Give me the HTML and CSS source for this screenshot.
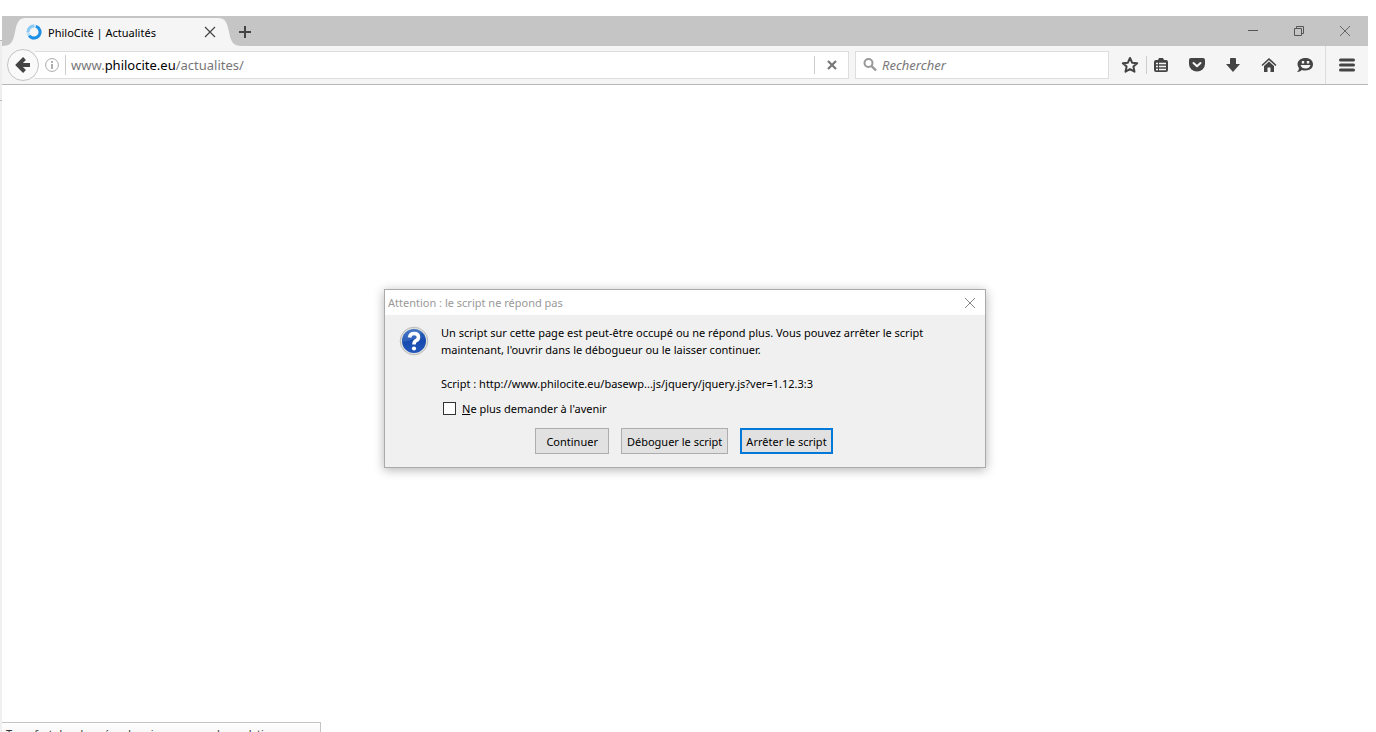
FILE: index.html
```html
<!DOCTYPE html>
<html lang="fr">
<head>
    <meta charset="UTF-8">
    <meta name="viewport" content="width=device-width, initial-scale=1.0">
    <title>PhiloCité | Actualités</title>
    <link rel="stylesheet" href="styles.css">
</head>
<body>
    <div class="desktop-edge"></div>
    <div class="window">
        <!-- Onglets -->
        <header class="tab-bar">
            <svg width="24" height="28" viewBox="0 0 24 28"><path d="M0 28C9 28 11 24 13 14C15 4 17 0 24 0V28Z" fill="#f5f5f5"/></svg>
            <div class="tab">
                <svg width="16" height="16" viewBox="0 0 16 16" fill="none" stroke-width="3">
                    <circle cx="8" cy="8" r="6" stroke="#bcdff5"/>
                    <path d="M8 2A6 6 0 0 0 2 8" stroke="#8cc9f2"/>
                    <path d="M10 2.400A6 6 0 1 1 3.200 11.600" stroke="#1e90e8"/>
                </svg>
                <span class="tab-title">PhiloCité | Actualités</span>
                <button class="icon-btn tab-close" aria-label="Fermer l'onglet">
                    <svg width="12" height="12" viewBox="0 0 12 12" stroke="#444" stroke-width="1.2"><path d="M1 1L11 11M11 1L1 11"/></svg>
                </button>
            </div>
            <svg width="24" height="28" viewBox="0 0 24 28"><path d="M24 28C15 28 13 24 11 14C9 4 7 0 0 0V28Z" fill="#f5f5f5"/></svg>
            <button class="icon-btn new-tab" aria-label="Nouvel onglet">
                <svg width="12" height="12" viewBox="0 0 12 12" stroke="#444" stroke-width="2"><path d="M6 0V12M0 6H12"/></svg>
            </button>
            <div class="window-controls">
                <button class="icon-btn" aria-label="Réduire"><svg width="12" height="12" viewBox="0 0 12 12" stroke="#555"><path d="M1 5.500H11"/></svg></button>
                <button class="icon-btn" aria-label="Restaurer"><svg width="12" height="12" viewBox="0 0 12 12" fill="none" stroke="#555"><path d="M1.500 3.500H8.500V10.500H1.500ZM3.500 3.500V1.500H10.500V8.500H8.500"/></svg></button>
                <button class="icon-btn" aria-label="Fermer"><svg width="12" height="12" viewBox="0 0 12 12" stroke="#666"><path d="M1 1L11 11M11 1L1 11"/></svg></button>
            </div>
        </header>

        <!-- Barre de navigation -->
        <nav class="nav-bar">
            <button class="icon-btn back-btn" aria-label="Page précédente">
                <svg width="16" height="16" viewBox="0 0 16 16" fill="none" stroke="#444" stroke-width="4"><path d="M9.500 1.500L3 8L9.500 14.500M3 8H15"/></svg>
            </button>
            <div class="url-bar">
                <svg width="14" height="14" viewBox="0 0 14 14" fill="none" stroke="#aaa"><circle cx="7" cy="7" r="6.400"/><path d="M7 6V11M7 3V5" stroke="#999" stroke-width="1.600"/></svg>
                <a class="url" href="#">www.<b>philocite.eu</b>/actualites/</a>
                <button class="icon-btn stop-btn" aria-label="Arrêter">
                    <svg width="10" height="10" viewBox="0 0 10 10" stroke="#777" stroke-width="2.200"><path d="M1 1L9 9M9 1L1 9"/></svg>
                </button>
            </div>
            <label class="search-bar">
                <svg width="14" height="14" viewBox="0 0 14 14" fill="none" stroke="#999" stroke-width="2"><circle cx="5.500" cy="5" r="4"/><path d="M8.500 8L13 12.500" stroke-width="2.400"/></svg>
                <input type="text" placeholder="Rechercher" aria-label="Rechercher">
            </label>
            <div class="tools">
                <button class="icon-btn star-btn" aria-label="Marquer cette page">
                    <svg width="18" height="18" viewBox="0 0 18 18" fill="none" stroke="#444" stroke-width="2" stroke-linejoin="round"><path d="M9 2L11.100 6.700L16.200 7.200L12.400 10.600L13.500 15.700L9 13.100L4.500 15.700L5.600 10.600L1.800 7.200L6.900 6.700Z"/></svg>
                </button>
                <button class="icon-btn tool-btn" aria-label="Marque-pages">
                    <svg width="16" height="16" viewBox="0 0 16 16"><path d="M5 3L6 1H10L11 3H13Q15 3 15 5V13Q15 15 13 15H3Q1 15 1 13V5Q1 3 3 3Z" fill="#444"/><path d="M3 6.500H5M6 6.500H13M3 9.500H5M6 9.500H13M3 12.500H5M6 12.500H13" stroke="#f5f5f5" stroke-width="1.600"/></svg>
                </button>
                <button class="icon-btn tool-btn" aria-label="Pocket">
                    <svg width="16" height="16" viewBox="0 0 16 16"><path d="M2 1H14Q16 1 16 3V7A8 7.500 0 0 1 0 7V3Q0 1 2 1Z" fill="#444"/><path d="M4.500 6L8 9.300L11.500 6" fill="none" stroke="#f5f5f5" stroke-width="2" stroke-linecap="round" stroke-linejoin="round"/></svg>
                </button>
                <button class="icon-btn tool-btn" aria-label="Téléchargements">
                    <svg width="16" height="16" viewBox="0 0 16 16" fill="#444"><path d="M6 1H10Q11 1 11 2V7H15L8 15L1 7H5V2Q5 1 6 1Z"/></svg>
                </button>
                <button class="icon-btn tool-btn" aria-label="Accueil">
                    <svg width="16" height="16" viewBox="0 0 16 16" fill="#444"><path d="M1 8.500L8 2L15 8.500" fill="none" stroke="#444" stroke-width="1.600"/><path d="M3 9L8 4.500L13 9V15H9.500V10.500H6.500V15H3Z"/></svg>
                </button>
                <button class="icon-btn tool-btn" aria-label="Discussion">
                    <svg width="16" height="16" viewBox="0 0 16 16"><path d="M8.500 1C13 1 16 3.500 16 7.300S13 13.500 8.500 13.500Q6.500 13.500 5 13Q3 15 0 15Q2 13.500 2 11.300Q.5 9.500 .5 7.300C.5 3.500 4 1 8.500 1Z" fill="#444"/><path d="M3.500 8H13.500Q12.500 11.500 8.500 11.500T3.500 8Z" fill="#f5f5f5"/><path d="M6 4V6.500M11 4V6.500" stroke="#f5f5f5" stroke-width="2.400"/></svg>
                </button>
                <button class="icon-btn menu-btn" aria-label="Menu">
                    <svg width="16" height="14" viewBox="0 0 16 14" stroke="#444" stroke-width="3" stroke-linecap="round"><path d="M1.500 2H14.500M1.500 7H14.500M1.500 12H14.500"/></svg>
                </button>
            </div>
        </nav>

        <main class="page">
            <section class="dialog" role="dialog" aria-labelledby="dialogTitle">
                <div class="dialog-title">
                    <span id="dialogTitle">Attention : le script ne répond pas</span>
                    <button class="icon-btn" aria-label="Fermer">
                        <svg width="12" height="12" viewBox="0 0 12 12" stroke="#888"><path d="M1 1L11 11M11 1L1 11"/></svg>
                    </button>
                </div>
                <div class="dialog-body">
                    <svg class="question" width="30" height="30" viewBox="0 0 30 30">
                        <defs><linearGradient id="blue" x1="0" y1="0" x2="0" y2="1"><stop offset="0" stop-color="#3568bd"/><stop offset=".5" stop-color="#174aae"/><stop offset="1" stop-color="#2457bb"/></linearGradient></defs>
                        <circle cx="15" cy="15" r="13.800" fill="#e2e2dc" stroke="#bbb"/>
                        <circle cx="15" cy="15" r="12" fill="url(#blue)"/>
                        <path d="M3 16A12 12 0 0 1 23 6Q18 14 3 16Z" fill="#6b95d8" opacity=".3"/>
                        <path d="M10.500 11.500Q11 7.500 15 7.500Q19.500 7.500 19.500 11.200Q19.500 13.500 17 14.700Q15 15.800 15 18.500" fill="none" stroke="#fff" stroke-width="3.600"/>
                        <circle cx="15" cy="22.500" r="2.100" fill="#fff"/>
                    </svg>
                    <div class="dialog-text">
                        <p>Un script sur cette page est peut-être occupé ou ne répond plus. Vous pouvez arrêter le script<br>maintenant, l'ouvrir dans le débogueur ou le laisser continuer.</p>
                        <p>Script : http://www.philocite.eu/basewp...js/jquery/jquery.js?ver=1.12.3:3</p>
                        <label class="check"><input type="checkbox"><span><u>N</u>e plus demander à l'avenir</span></label>
                    </div>
                </div>
                <div class="dialog-actions">
                    <button class="btn btn-small">Continuer</button>
                    <button class="btn">Déboguer le script</button>
                    <button class="btn btn-default">Arrêter le script</button>
                </div>
            </section>
        </main>
    </div>
    <div class="status">Transfert des données depuis www.google-analytics.com…</div>
</body>
</html>
```
FILE: styles.css
```css
* {
    box-sizing: border-box;
}
body {
    display: flex;
    height: 100vh;
    margin: 0;
    overflow: hidden;
    position: relative;
    background: #fff;
    color: #000;
    font-family: "Noto Sans", "Open Sans", sans-serif;
    font-size: 11px;
}
svg {
    display: block;
    flex: none;
}
button, input {
    font: inherit;
    color: inherit;
}
.desktop-edge {
    width: 2px;
    margin-top: 40px;
    background: linear-gradient(#bbb 1px, #eee 1px, #eee 60px, #bbb 60px, #bbb 61px, #f0f0f0 61px);
}
.window {
    flex: 1;
    display: flex;
    flex-direction: column;
    margin: 16px 8px 0 0;
}
.icon-btn {
    display: flex;
    align-items: center;
    justify-content: center;
    padding: 0;
    border: none;
    background: none;
}

/* onglets */
.tab-bar {
    display: flex;
    align-items: flex-end;
    height: 30px;
    background: #c5c5c5;
}
.tab {
    display: flex;
    align-items: center;
    width: 192px;
    height: 28px;
    background: #f5f5f5;
}
.tab-title {
    flex: 1;
    margin-left: 6px;
    white-space: nowrap;
}
.tab-close {
    width: 16px;
    height: 28px;
}
.new-tab {
    height: 28px;
    margin-left: -3px;
}
.window-controls {
    display: flex;
    align-self: center;
    margin-left: auto;
}
.window-controls .icon-btn {
    width: 46px;
    height: 28px;
}

/* navigation */
.nav-bar {
    display: flex;
    align-items: center;
    height: 39px;
    background: #f5f5f5;
    border-bottom: 1px solid #b8b8b8;
}
.back-btn {
    position: relative;
    flex: none;
    width: 32px;
    height: 32px;
    margin-left: 5px;
    border: 1px solid #c4c4c4;
    border-radius: 50%;
    background: #fafafa;
}
.url-bar, .search-bar {
    display: flex;
    align-items: center;
    height: 28px;
    border: 1px solid #ddd;
    background: #fff;
}
.url-bar {
    flex: 1;
    margin-left: -4px;
    padding-left: 10px;
    border-left: none;
}
.url {
    flex: 1;
    margin-left: 6px;
    padding-left: 5px;
    border-left: 1px solid #ccc;
    color: #777;
    font-size: 13px;
    line-height: 20px;
    text-decoration: none;
}
.url b {
    color: #000;
    font-weight: normal;
}
.stop-btn {
    width: 34px;
    height: 18px;
    border-left: 1px solid #ccc;
}
.search-bar {
    width: 254px;
    margin-left: 6px;
    padding-left: 7px;
}
.search-bar input {
    flex: 1;
    min-width: 0;
    margin-left: 5px;
    padding: 0;
    border: none;
    outline: none;
    background: none;
    font-size: 13px;
}
.search-bar input::placeholder {
    color: #777;
    font-style: italic;
}
.tools {
    display: flex;
    align-items: center;
}
.star-btn {
    width: 38px;
    height: 18px;
    padding-left: 4px;
    border-right: 1px solid #ccc;
}
.tool-btn {
    width: 36px;
    height: 28px;
}
.star-btn + .tool-btn {
    width: 32px;
    padding-right: 4px;
}
.menu-btn {
    width: 43px;
    height: 38px;
    margin-left: 2px;
    border-left: 1px solid #ddd;
}

/* boîte de dialogue */
.page {
    flex: 1;
    display: flex;
    align-items: flex-start;
    justify-content: center;
    padding-top: 204px;
}
.dialog {
    width: 602px;
    border: 1px solid #aaa;
    background: #f0f0f0;
    box-shadow: 0 2px 10px rgba(0,0,0,0.3);
}
.dialog-title {
    display: flex;
    align-items: center;
    justify-content: space-between;
    height: 25px;
    padding: 0 9px 0 3px;
    background: #fff;
    color: #999;
}
.dialog-body {
    display: flex;
    gap: 12px;
    padding: 9px 14px 0;
}
.question {
    margin-top: 2px;
}
.dialog-text {
    flex: 1;
    line-height: 17px;
}
.dialog-text p {
    margin: 0 0 17px;
}
.dialog-text p + p {
    margin-bottom: 8px;
}
.check {
    display: flex;
    align-items: center;
    gap: 6px;
    padding-left: 2px;
}
.check input {
    appearance: none;
    width: 13px;
    height: 13px;
    margin: 0;
    border: 1px solid #333;
    background: #fff;
}
.dialog-actions {
    display: flex;
    justify-content: center;
    gap: 12px;
    padding: 11px 2px 13px 0;
}
.btn {
    height: 26px;
    padding: 0 5px;
    border: 1px solid #adadad;
    background: #e1e1e1;
    white-space: nowrap;
}
.btn-small {
    padding: 0 10px;
}
.btn-default {
    padding: 0 4px;
    border: 2px solid #0078d7;
}

/* message de chargement, dépasse du bas de la fenêtre */
.status {
    position: absolute;
    left: 2px;
    bottom: -12px;
    width: 319px;
    height: 22px;
    padding-left: 4px;
    border: 1px solid #c4c4c4;
    border-left: none;
    background: linear-gradient(#fff, #eee);
    color: #333;
    line-height: 22px;
    white-space: nowrap;
}
```
